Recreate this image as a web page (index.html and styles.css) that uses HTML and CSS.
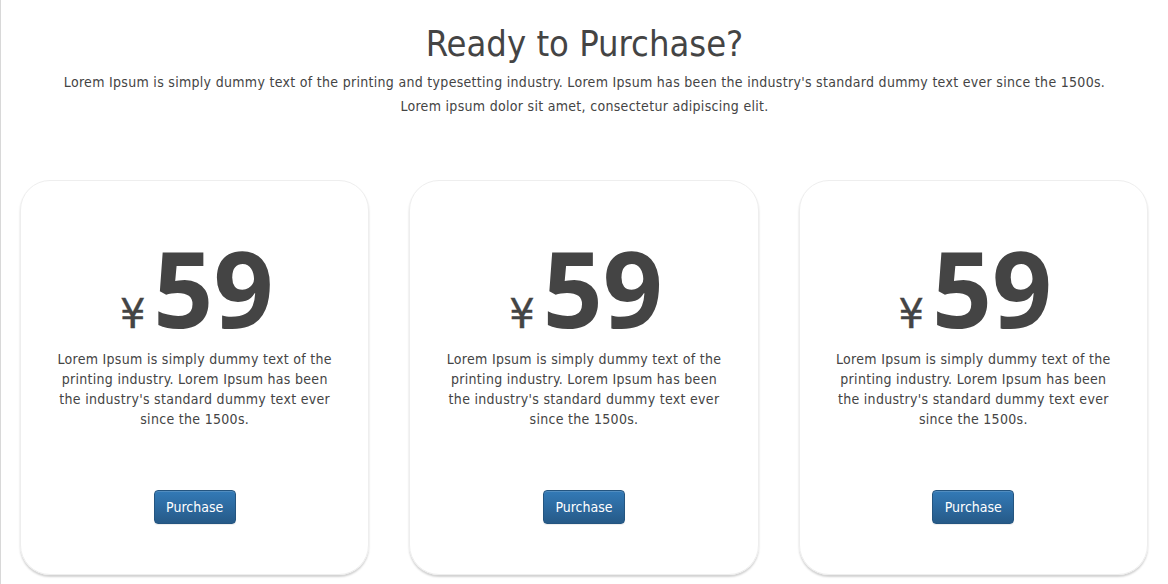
FILE: index.html
```html
<!DOCTYPE html>
<html>
<head>
<meta charset="utf-8">
<link rel="stylesheet" href="styles.css">
</head>
<body>
<div class="page">
  <header class="intro">
    <h1 class="title">Ready to Purchase?</h1>
    <p class="lead">Lorem Ipsum is simply dummy text of the printing and typesetting industry. Lorem Ipsum has been the industry's standard dummy text ever since the 1500s.<br>Lorem ipsum dolor sit amet, consectetur adipiscing elit.</p>
  </header>
  <section class="plans">
    <div class="card">
      <div class="price"><span class="cur">¥</span><span class="amount">59</span></div>
      <p class="desc">Lorem Ipsum is simply dummy text of the printing industry. Lorem Ipsum has been the industry's standard dummy text ever since the 1500s.</p>
      <button class="btn">Purchase</button>
    </div>
    <div class="card">
      <div class="price"><span class="cur">¥</span><span class="amount">59</span></div>
      <p class="desc">Lorem Ipsum is simply dummy text of the printing industry. Lorem Ipsum has been the industry's standard dummy text ever since the 1500s.</p>
      <button class="btn">Purchase</button>
    </div>
    <div class="card">
      <div class="price"><span class="cur">¥</span><span class="amount">59</span></div>
      <p class="desc">Lorem Ipsum is simply dummy text of the printing industry. Lorem Ipsum has been the industry's standard dummy text ever since the 1500s.</p>
      <button class="btn">Purchase</button>
    </div>
  </section>
</div>
</body>
</html>
```

FILE: styles.css
```css
html, body {
  margin: 0;
  padding: 0;
  background: #fff;
}
body {
  font-family: "DejaVu Sans Condensed", "DejaVu Sans", sans-serif;
  color: #444;
}
.page {
  border-left: 1px solid #d8d8d8;
  min-height: 584px;
  box-sizing: border-box;
}
.intro {
  text-align: center;
  padding-top: 22px;
}
.title {
  margin: 0;
  font-weight: normal;
  font-size: 36px;
  line-height: 44px;
  color: #444;
}
.lead {
  margin: 4px 0 0;
  font-size: 14px;
  line-height: 24px;
  letter-spacing: 0.3px;
  color: #444;
}
.plans {
  display: flex;
  gap: 40px;
  padding: 0 20px 0 19px;
  margin-top: 62px;
}
.card {
  width: 350px;
  height: 395px;
  box-sizing: border-box;
  border: 1px solid #eee;
  border-radius: 30px;
  box-shadow: 0 2px 2px rgba(0,0,0,0.18);
  display: flex;
  flex-direction: column;
  align-items: center;
  padding: 52px 30px 50px;
}
.price {
  display: flex;
  align-items: baseline;
  justify-content: center;
  line-height: 1;
  margin-left: 4px;
}
.cur {
  font-family: "DejaVu Sans", sans-serif;
  font-size: 40px;
  margin-right: 8px;
  -webkit-text-stroke: 0.4px #444;
}
.amount {
  font-family: "Open Sans", sans-serif;
  font-weight: bold;
  font-size: 105px;
  line-height: 110px;
  color: #444;
}
.desc {
  margin: 6px 0 0;
  font-size: 14px;
  line-height: 20px;
  letter-spacing: 0.3px;
  text-align: center;
}
.btn {
  margin-top: auto;
  width: 82px;
  height: 34px;
  border: 1px solid #245580;
  border-radius: 4px;
  background: linear-gradient(#337ab7, #265a88);
  color: #fff;
  font-family: "DejaVu Sans Condensed", "DejaVu Sans", sans-serif;
  font-size: 14px;
  padding: 0;
  box-shadow: inset 0 1px 0 rgba(255,255,255,0.15), 0 1px 1px rgba(0,0,0,0.075);
}
```
